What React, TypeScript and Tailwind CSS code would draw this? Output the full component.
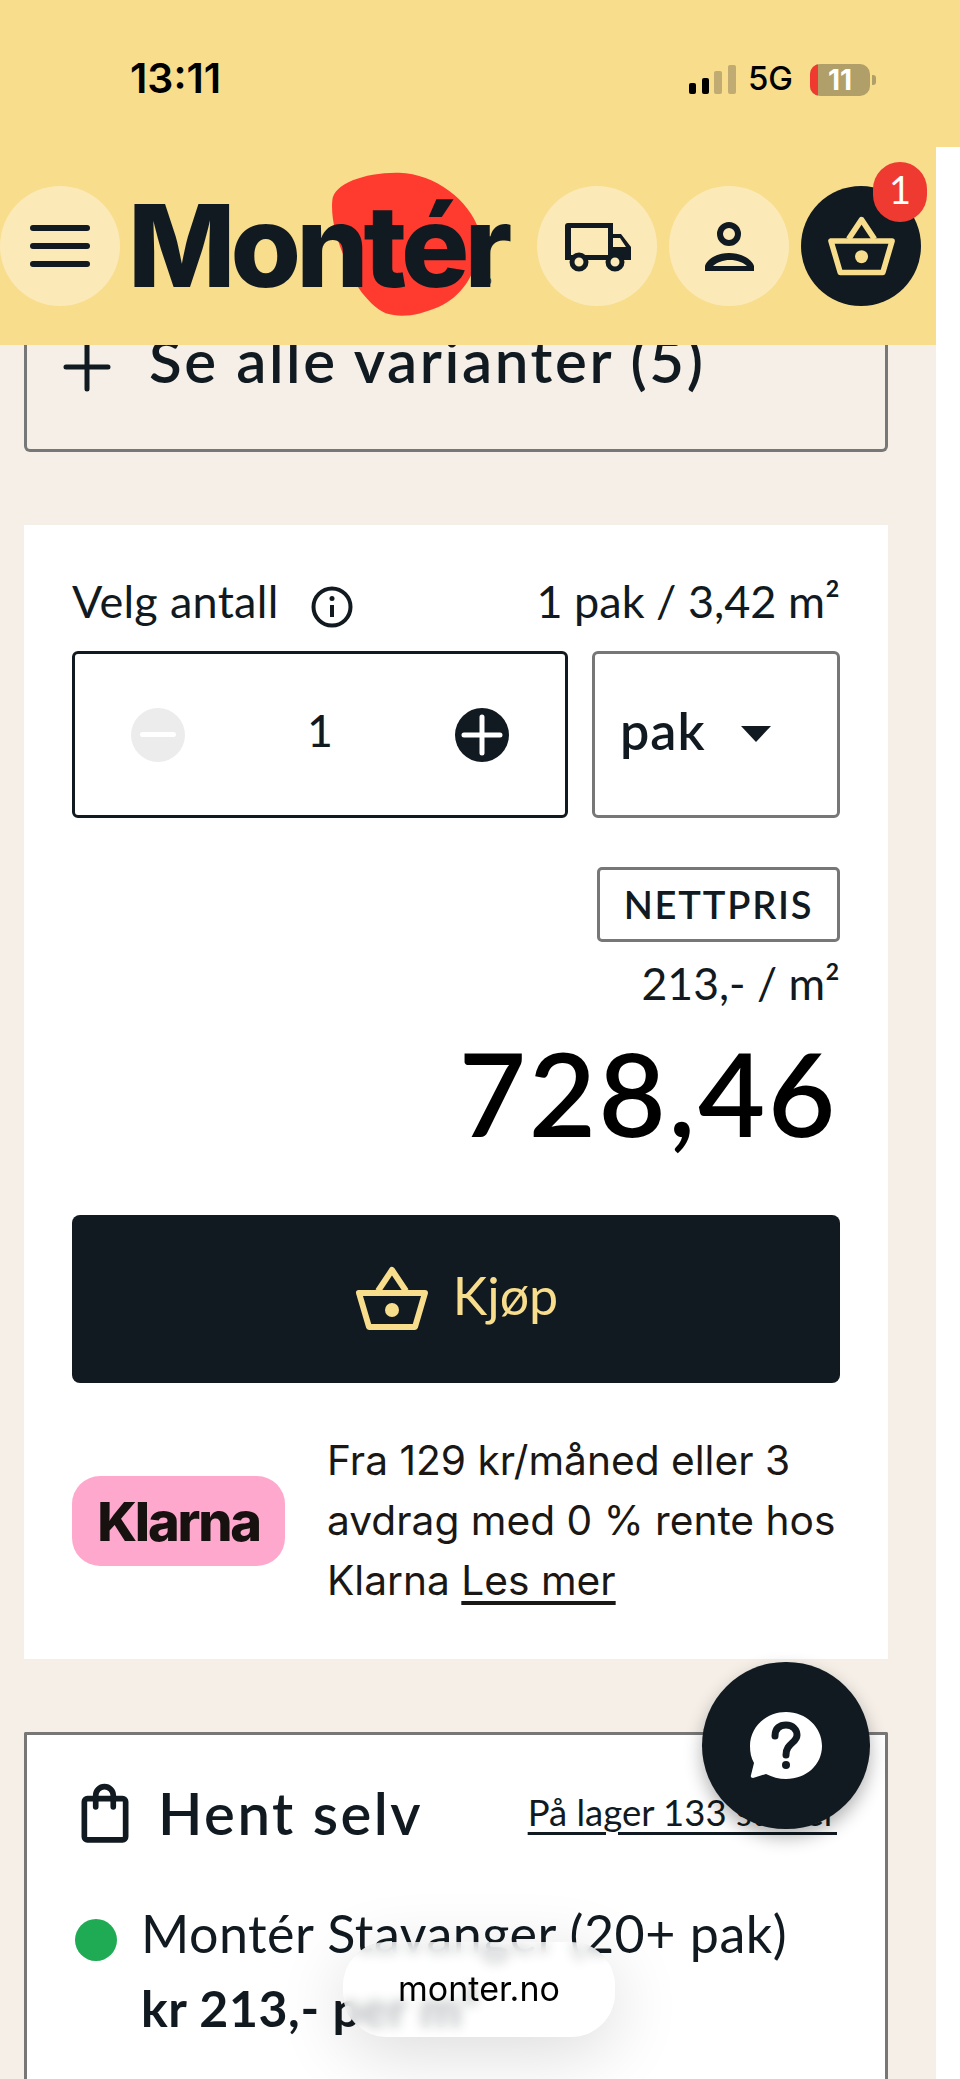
const DARK = "#111a20";

function Basket({ color, className }: { color: string; className: string }) {
  return (
    <svg viewBox="14 14 77 68" fill="none" className={className}>
      <path d="M38 40 L52 19 L66 40" stroke={color} strokeWidth="6" strokeLinejoin="round" />
      <path d="M19 42 H85 L75 76 H29 Z" stroke={color} strokeWidth="6" strokeLinejoin="round" />
      <circle cx="52" cy="59" r="7" fill={color} />
    </svg>
  );
}

function Truck() {
  return (
    <svg viewBox="-3 1 100 80" className="h-[80px] w-[100px]">
      <path
        fillRule="evenodd"
        fill={DARK}
        d="M18 18 H63 V29 H71 L81 42 V55 H15 V21 a3 3 0 0 1 3 -3Z M21 23 V50 H58 V23 Z M63 33 V42 H76 L70 33 Z"
      />
      <circle cx="29" cy="57" r="7" fill="#fbeab8" stroke={DARK} strokeWidth="5" />
      <circle cx="65" cy="57" r="7" fill="#fbeab8" stroke={DARK} strokeWidth="5" />
    </svg>
  );
}

function User() {
  return (
    <svg viewBox="0 0 60 60" className="h-[60px] w-[60px]">
      <circle cx="30" cy="18" r="9" fill="none" stroke={DARK} strokeWidth="6" />
      <path
        fillRule="evenodd"
        fill={DARK}
        d="M6 55 V50 C8 43 18 37 30 37 C42 37 53 43 55 50 V55 Z M14 50 H48 C44 46.5 38 44 31 44 C24 44 18 46.5 14 50 Z"
      />
    </svg>
  );
}

function Bag() {
  return (
    <svg viewBox="18 12 54 62" fill="none" stroke={DARK} strokeWidth="5.5" strokeLinecap="round" className="ml-[2px] h-[64px] w-[56px]">
      <rect x="25" y="29" width="40" height="40" rx="3" />
      <path d="M36 37 V26 a8.5 8.5 0 0 1 17 0 V37" />
    </svg>
  );
}

function HelpIcon() {
  return (
    <svg viewBox="46 46 100 100" className="h-[100px] w-[100px]">
      <path
        fill="#fff"
        d="M96 62 C116 62 132 77 132 96 C132 115 116 129 96 129 C89 129 82 127 76 124 L63 128 Q60 128 61 125 L64 113 C61 108 60 102 60 96 C60 77 76 62 96 62 Z"
      />
      <path d="M85 86 C85 78 90 75 96 75 C103 75 107 80 107 85 C107 93 96 93 96 105" fill="none" stroke={DARK} strokeWidth="7" strokeLinecap="round" />
      <circle cx="96" cy="115" r="4" fill={DARK} />
    </svg>
  );
}

function CircleButton({ children, dark }: { children: React.ReactNode; dark?: boolean }) {
  return (
    <div className={`relative flex h-[120px] w-[120px] shrink-0 items-center justify-center rounded-full ${dark ? "bg-[#111a20]" : "bg-[#fbeab8]"}`}>
      {children}
    </div>
  );
}

function StatusBar() {
  return (
    <div className="flex h-[147px] items-start justify-between bg-[#f7dd8c] pl-[130px] pr-[84px] pt-[56px] font-['Inter'] text-black">
      <span className="text-[41px] leading-[44px] font-semibold">13:11</span>
      <div className="flex items-end pt-[7px]">
        <div className="flex h-[29px] items-end gap-[5.5px]">
          <i className="h-[11px] w-[7px] rounded-[2px] bg-black" />
          <i className="h-[16px] w-[7px] rounded-[2px] bg-black" />
          <i className="h-[23px] w-[8px] rounded-[2px] bg-[#c0ac73]" />
          <i className="h-[29px] w-[8px] rounded-[2px] bg-[#c0ac73]" />
        </div>
        <span className="ml-[12px] text-[33px] leading-[31px] font-medium">5G</span>
        <div className="relative mb-[-2px] ml-[17px] flex h-[32px] w-[60px] items-center justify-center overflow-hidden rounded-[10px] bg-[#b09f68] text-[28px] font-bold text-white">
          <i className="absolute inset-y-0 left-0 w-[8px] bg-[#f0392f]" />
          <span className="relative">11</span>
        </div>
        <i className="mb-[9px] ml-[2px] h-[10px] w-[4px] rounded-r-[3px] bg-[#b09f68]" />
      </div>
    </div>
  );
}

function Header() {
  return (
    <header className="flex h-[198px] items-center bg-[#f7dd8c]">
      <CircleButton>
        <div className="flex w-[60px] flex-col gap-[12px]">
          <i className="h-[6px] rounded-full bg-[#111a20]" />
          <i className="h-[6px] rounded-full bg-[#111a20]" />
          <i className="h-[6px] rounded-full bg-[#111a20]" />
        </div>
      </CircleButton>
      <div className="relative ml-[12px] h-[120px] w-[405px] shrink-0">
        <svg viewBox="0 0 1568 600" className="absolute left-[-130px] top-[-36px] h-[200px] w-[530px]">
          <path
            fill="#ff3b30"
            d="M980 150 C985 100 1080 66 1180 68 C1290 72 1390 150 1420 240 C1430 330 1390 430 1300 470 C1240 495 1190 505 1140 490 C1080 460 1030 380 1015 320 C990 260 975 200 980 150 Z"
          />
        </svg>
        <span className="absolute left-[-4px] top-[-7px] font-['Inter'] text-[114px] leading-[134px] font-extrabold tracking-[-5px] text-[#111a20]">
          Montér
        </span>
        <span className="absolute left-[351px] top-[89px] font-['Inter'] text-[13px] leading-[14px] text-[#111a20]">®</span>
      </div>
      <CircleButton>
        <Truck />
      </CircleButton>
      <div className="ml-[12px]">
        <CircleButton>
          <User />
        </CircleButton>
      </div>
      <div className="ml-[12px]">
        <CircleButton dark>
          <Basket color="#f7dd8c" className="ml-[2px] h-[63px] w-[72px]" />
          <span className="absolute right-[-6px] top-[-24px] flex h-[60px] w-[54px] items-center justify-center rounded-full bg-[#ef3a32] pb-[6px] font-['Lato'] text-[38px] text-white">
            1
          </span>
        </CircleButton>
      </div>
    </header>
  );
}

function VariantCard() {
  return (
    <div className="mx-[24px] flex h-[107px] w-[864px] items-start overflow-hidden rounded-b-[6px] border-x-[3px] border-b-[3px] border-[#777] pl-[36px]">
      <svg viewBox="0 0 48 50" className="mt-[-3px] h-[50px] w-[48px] shrink-0" stroke={DARK} strokeWidth="5" strokeLinecap="round">
        <path d="M3 25 H45 M24 3 V47" />
      </svg>
      <span className="ml-[38px] mt-[-19px] text-[60px] leading-[68px] font-semibold tracking-[2.6px] whitespace-nowrap">Se alle varianter (5)</span>
    </div>
  );
}

function BuyCard() {
  return (
    <section className="mx-[24px] mt-[73px] flex h-[1134px] w-[864px] flex-col bg-white px-[48px] pt-[52px]">
      <div className="flex h-[58px] items-center justify-between text-[45px] leading-[58px]">
        <div className="flex items-center">
          <span className="mt-[-10px] tracking-[0.3px]">Velg antall</span>
          <svg viewBox="0 0 42 42" className="ml-[32px] mt-[1px] h-[42px] w-[42px]" fill="none" stroke={DARK}>
            <circle cx="21" cy="21" r="18.5" strokeWidth="4" />
            <path d="M21 19 V31" strokeWidth="4" />
            <circle cx="21" cy="12.5" r="2.5" fill={DARK} stroke="none" />
          </svg>
        </div>
        <span className="mt-[-10px]">1 pak / 3,42 m²</span>
      </div>

      <div className="mt-[16px] flex h-[167px] gap-[24px]">
        <div className="flex w-[496px] items-center justify-between rounded-[6px] border-[3px] border-[#111a20] pl-[56px] pr-[56px]">
          <div className="flex h-[54px] w-[54px] items-center justify-center rounded-full bg-[#ececec]">
            <i className="h-[5px] w-[36px] rounded-full bg-white" />
          </div>
          <span className="mt-[-10px] text-[44px] font-medium">1</span>
          <svg viewBox="0 0 54 54" className="h-[54px] w-[54px]">
            <circle cx="27" cy="27" r="27" fill={DARK} />
            <path d="M9 27 H45 M27 9 V45" stroke="#fff" strokeWidth="5" strokeLinecap="round" />
          </svg>
        </div>
        <div className="flex w-[248px] items-center rounded-[6px] border-[3px] border-[#777] pl-[25px]">
          <span className="mt-[-10px] text-[52px] font-semibold tracking-[1px]">pak</span>
          <i className="ml-[35px] mt-[-2px] h-0 w-0 border-x-[15px] border-t-[16px] border-x-transparent border-t-[#111a20]" />
        </div>
      </div>

      <div className="mt-[49px] flex flex-col items-end">
        <div className="flex h-[75px] w-[243px] items-center justify-center rounded-[5px] border-[3px] border-[#777] text-[38px] font-semibold tracking-[1.8px]">
          NETTPRIS
        </div>
        <span className="mt-[16px] text-[44.5px] leading-[50px]">213,- / m²</span>
        <span className="mr-[2px] mt-[20px] text-[116px] leading-[130px] font-semibold tracking-[2.7px] text-black">728,46</span>
      </div>

      <div className="mt-[57px] flex h-[168px] shrink-0 items-center justify-center gap-[22px] rounded-[8px] bg-[#111a20] text-[#f7dd8c]">
        <Basket color="#f7dd8c" className="h-[68px] w-[77px]" />
        <span className="mt-[-8px] text-[52px]">Kjøp</span>
      </div>

      <div className="mt-[48px] flex items-center">
        <div className="flex h-[90px] w-[213px] shrink-0 items-center justify-center rounded-[28px] bg-[#ffa8cd] font-['Inter'] text-[54px] font-extrabold tracking-[-2.2px] text-[#17120f]">
          Klarna
        </div>
        <p className="ml-[42px] whitespace-nowrap font-['Inter'] text-[40.7px] leading-[60px] text-[#1a1714]">
          Fra 129 kr/måned eller 3<br />
          avdrag med 0 % rente hos<br />
          Klarna <a className="underline underline-offset-[6px]">Les mer</a>
        </p>
      </div>
    </section>
  );
}

function PickupCard() {
  return (
    <section className="mx-[24px] mt-[73px] h-[360px] w-[864px] rounded-t-[2px] border-x-[3px] border-t-[3px] border-[#777] bg-white pl-[48px] pr-[48px]">
      <div className="flex h-[110px] items-end">
        <Bag />
        <span className="ml-[25px] mb-[-2px] text-[58px] leading-[68px] font-semibold tracking-[2.5px]">Hent selv</span>
        <a className="mb-[11px] ml-auto whitespace-nowrap text-[36.5px] leading-[44px] underline underline-offset-[6px]">På lager 133 steder</a>
      </div>
      <div className="mt-[51px] flex items-start">
        <i className="mt-[23px] h-[42px] w-[42px] shrink-0 rounded-full bg-[#1fab54]" />
        <div className="ml-[24px] leading-[75px] whitespace-nowrap">
          <p className="text-[52px] tracking-[0.5px]">Montér Stavanger (20+ pak)</p>
          <p className="text-[50px] font-bold tracking-[0.6px]">kr 213,- per m²</p>
        </div>
      </div>
    </section>
  );
}

export default function App() {
  return (
    <div className="relative h-[2079px] w-[960px] overflow-hidden bg-white font-['Lato',sans-serif] text-[#111a20]">
      <StatusBar />
      <main className="h-[1932px] w-[936px] overflow-hidden bg-[#f5efe8]">
        <Header />
        <VariantCard />
        <BuyCard />
        <PickupCard />
      </main>

      {/* chat-knapp og Safari-adressefelt ligger over innholdet */}
      <div className="absolute left-[702px] top-[1662px] flex h-[167px] w-[168px] items-center justify-center rounded-full bg-[#111a20] shadow-[0_8px_18px_rgba(0,0,0,0.3)]">
        <HelpIcon />
      </div>
      <div className="absolute left-[343px] top-[1942px] flex h-[95px] w-[272px] items-center justify-center rounded-[44px] bg-white/70 pb-[2px] font-['Inter'] text-[34px] text-black shadow-[0_16px_70px_rgba(0,0,0,0.14)] backdrop-blur-[6px]">
        monter.no
      </div>
    </div>
  );
}
